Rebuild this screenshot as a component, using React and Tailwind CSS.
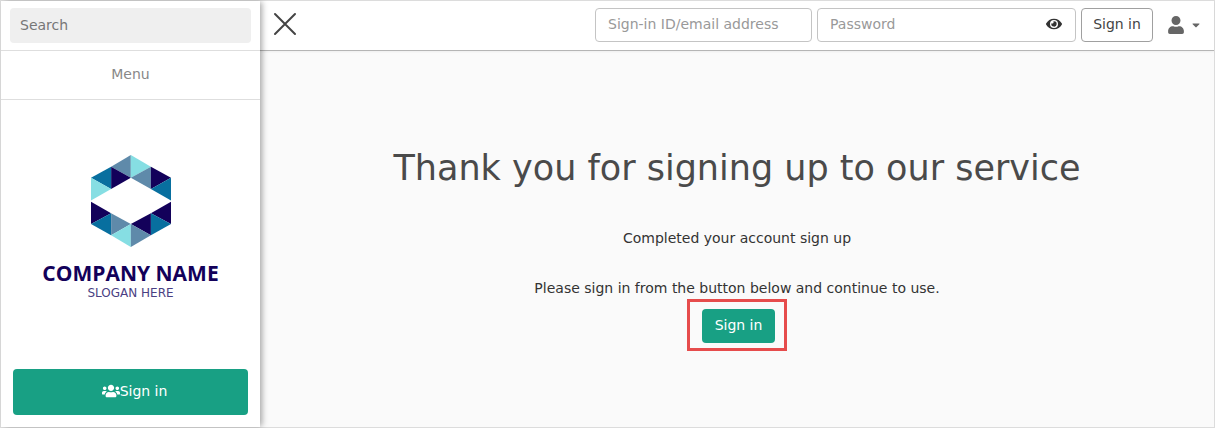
import React, { useState } from "react";
import { FaCaretDown, FaEye, FaUser, FaUsers } from "react-icons/fa";

const slate = "#5f8aaa";
const navy = "#13015a";
const blue = "#086f9f";
const cyan = "#86dee3";

const triangles = [
    { points: "119,0 119,68 60,35", fill: slate },
    { points: "60,35 119,68 60,102", fill: navy },
    { points: "60,35 60,102 0,68", fill: blue },
    { points: "0,68 0,136 60,102", fill: cyan },
    { points: "119,0 179,35 119,68", fill: cyan },
    { points: "179,35 179,102 119,68", fill: slate },
    { points: "179,35 239,68 179,102", fill: navy },
    { points: "239,68 239,136 179,102", fill: blue },
    { points: "0,140 60,174 0,206", fill: navy },
    { points: "0,206 60,174 60,240", fill: blue },
    { points: "60,174 119,206 60,240", fill: slate },
    { points: "60,240 119,206 119,275", fill: cyan },
    { points: "239,140 239,206 179,174", fill: navy },
    { points: "179,174 239,206 179,240", fill: blue },
    { points: "179,174 179,240 119,206", fill: navy },
    { points: "119,206 179,240 119,275", fill: slate },
];

function Logo() {
    return (
        <div className="flex flex-col items-center pt-[55px] text-[#13015a]">
            <svg viewBox="0 0 239 275" className="h-[92px] w-20" aria-hidden="true">
                {triangles.map((t) => (
                    <polygon key={t.points} points={t.points} fill={t.fill} />
                ))}
            </svg>
            <p className="mt-3 font-['Open_Sans',sans-serif] text-[21px] leading-7 font-bold whitespace-nowrap">COMPANY NAME</p>
            <p className="text-xs leading-3 text-[#4a3f83]">SLOGAN HERE</p>
        </div>
    );
}

function Sidebar() {
    return (
        <aside className="relative flex w-[259px] shrink-0 flex-col bg-white shadow-[3px_0_6px_-1px_rgba(0,0,0,0.35)]">
            <div className="border-b border-[#dedede] px-[9px] py-[7px]">
                <input
                    type="search"
                    aria-label="Search"
                    placeholder="Search"
                    className="block h-[35px] w-full rounded bg-[#efefef] px-[10px] pb-[2px] placeholder:text-[#777]"
                />
            </div>
            <div className="border-b border-[#dedede] pt-[13px] pb-[15px] text-center leading-5 text-[#888]">Menu</div>
            <Logo />
            <div className="mt-auto p-3">
                <button className="flex h-[46px] w-full items-center justify-center rounded bg-[#18a084] pb-[2px] pl-2 text-white">
                    <FaUsers size={18} />
                    Sign in
                </button>
            </div>
        </aside>
    );
}

function Header() {
    const [showPassword, setShowPassword] = useState(false);

    return (
        <header className="flex h-[50px] items-center justify-between border-b border-[#b5b5b5] bg-white pr-3 pb-[2px] pl-[13px] shadow-xs">
            <button aria-label="Close menu" className="pb-[2px]">
                <svg viewBox="0 0 24 24" className="size-6" stroke="#444" strokeWidth="2" strokeLinecap="round">
                    <path d="M2 2L22 22M22 2L2 22" />
                </svg>
            </button>
            <form className="flex items-center gap-[5px]" onSubmit={(e) => e.preventDefault()}>
                <input
                    type="text"
                    aria-label="Sign-in ID/email address"
                    placeholder="Sign-in ID/email address"
                    className="h-[34px] w-[217px] rounded border border-[#c4c4c4] px-3 pb-[2px] placeholder:text-[#999]"
                />
                <div className="flex h-[34px] w-[259px] items-center rounded border border-[#c4c4c4] pr-[13px] pb-[2px] pl-3">
                    <input
                        type={showPassword ? "text" : "password"}
                        aria-label="Password"
                        placeholder="Password"
                        className="min-w-0 flex-1 outline-none placeholder:text-[#999]"
                    />
                    <button type="button" aria-label="Show password" onClick={() => setShowPassword(!showPassword)}>
                        <FaEye size={16} color="#333" />
                    </button>
                </div>
                <button className="h-[34px] w-[72px] rounded border border-[#a0a0a0] pb-[2px] text-[#444]">Sign in</button>
                <button type="button" aria-label="Account" className="ml-[9px] flex items-center gap-[5px] text-[#666]">
                    <FaUser size={18} />
                    <FaCaretDown size={12} />
                </button>
            </form>
        </header>
    );
}

export default function App() {
    return (
        <div className="flex min-h-screen border border-[#dcdcdc] bg-[#fafafa] font-['DejaVu_Sans',sans-serif] text-sm text-[#333]">
            <Sidebar />
            <div className="flex min-w-0 flex-1 flex-col">
                <Header />
                <main className="flex flex-col items-center pt-[97px] text-center">
                    <h1 className="text-[35px] leading-10 text-[#4a4a4a]">Thank you for signing up to our service</h1>
                    <p className="mt-10 leading-5">Completed your account sign up</p>
                    <p className="mt-[30px] leading-5">Please sign in from the button below and continue to use.</p>
                    <div className="mt-px border-3 border-[#e64c4c] pt-[7px] pr-[9px] pb-[5px] pl-3">
                        <button className="block h-[34px] w-[73px] rounded bg-[#18a084] pb-[2px] text-white">Sign in</button>
                    </div>
                </main>
            </div>
        </div>
    );
}
